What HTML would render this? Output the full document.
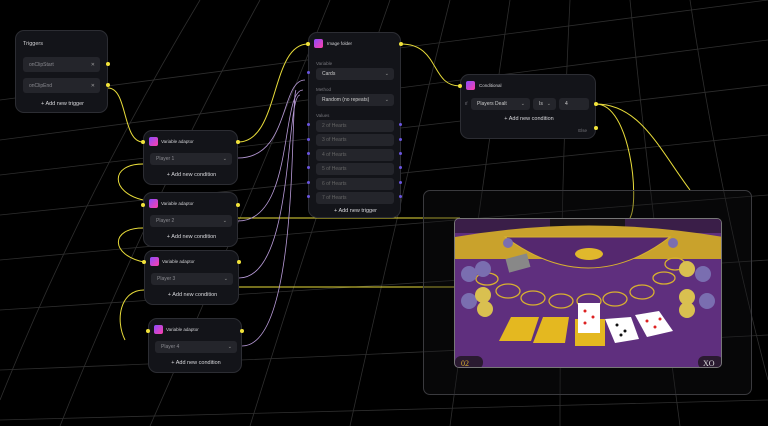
<!DOCTYPE html>
<html><head><meta charset="utf-8"><style>
*{margin:0;padding:0;box-sizing:border-box}
body{width:768px;height:426px;background:#000;overflow:hidden;position:relative;font-family:"Liberation Sans",sans-serif;color:#d8d8dc}
.n{position:absolute;background:#131419;border:1px solid #2c2d33;border-radius:9px}
.t{position:absolute;font-size:5.5px;color:#d0d0d4}
.ic{position:absolute;width:9px;height:9px;border-radius:2px;background:linear-gradient(135deg,#8a4cff,#ff3fa8)}
.f{position:absolute;background:#24252b;border-radius:3px;font-size:5px;color:#8a8a90;padding-left:6px;display:flex;align-items:center}
.add{position:absolute;font-size:5.5px;color:#d8d8dc;text-align:center}
.d{position:absolute;width:4px;height:4px;border-radius:50%;background:#f2e33a}
.p{position:absolute;width:3px;height:3px;border-radius:50%;background:#6a55e0}
.l{position:absolute;font-size:4.5px;color:#77777d}
.chev{position:absolute;right:5px;font-size:5px;color:#999}
</style></head><body>
<svg width="768" height="426" style="position:absolute;left:0;top:0">
<g stroke="#3a3a3a" stroke-width="0.8" fill="none" opacity="0.8">
<path d="M0 140 Q380 90 768 40"/><path d="M0 175 Q380 130 768 85"/><path d="M0 215 Q380 175 768 135"/>
<path d="M0 260 Q380 225 768 195"/><path d="M0 310 Q380 285 768 260"/><path d="M0 370 Q380 355 768 335"/>
<path d="M0 420 Q380 410 768 400"/><path d="M0 100 Q380 50 768 0"/>
<path d="M60 426 Q150 200 260 0"/><path d="M150 426 Q250 200 330 0"/><path d="M250 426 Q320 200 390 0"/>
<path d="M350 426 Q400 200 450 0"/><path d="M450 426 Q480 200 510 0"/><path d="M560 426 Q560 200 570 0"/>
<path d="M680 426 Q650 200 630 0"/><path d="M768 380 Q720 200 690 0"/><path d="M0 400 Q80 200 200 0"/>
</g>
<g stroke="#e8dc3a" stroke-width="1" fill="none">
<path d="M108 88 C128 88 122 142 143 142"/>
<path d="M238 142 C280 142 270 44 308 44"/>
<path d="M401 44 C440 44 430 86 460 86"/>
<path d="M596 104 C640 104 660 150 690 190"/>
<path d="M596 104 C630 104 640 200 630 218"/>
<path d="M238 218 L460 218"/>
<path d="M238 287 L454 287"/>
<path d="M143 164 C110 164 110 192 143 200"/>
<path d="M143 228 C110 228 110 255 144 262"/>
<path d="M144 290 C120 290 115 320 125 340"/>
</g>
<g stroke="#b89ad8" stroke-width="0.8" fill="none">
<path d="M238 158 C290 158 280 80 305 80"/>
<path d="M238 221 C295 221 280 90 303 90"/>
<path d="M239 278 C295 278 285 95 300 95"/>
<path d="M242 346 C300 346 290 100 296 90"/>
</g>
</svg>

<div class="n" style="left:15px;top:30px;width:93px;height:83px">
<div class="t" style="left:7px;top:10px">Triggers</div>
<div class="f" style="left:7px;top:26px;width:77px;height:15px">onClipStart<span class="chev">✕</span></div>
<div class="f" style="left:7px;top:47px;width:77px;height:15px">onClipEnd<span class="chev">✕</span></div>
<div class="add" style="left:0;width:93px;top:70px">+ Add new trigger</div>
</div>
<div class="d" style="left:106px;top:62px"></div><div class="d" style="left:106px;top:83px"></div>

<div class="n" style="left:143px;top:130px;width:95px;height:55px"><div class="ic" style="left:5px;top:6px"></div><div class="t" style="left:17px;top:8px;font-size:4.5px">Variable adaptor</div><div class="f" style="left:6px;top:22px;width:82px;height:12px">Player 1<span class="chev">⌄</span></div><div class="add" style="left:0;width:95px;top:41px">+ Add new condition</div></div>
<div class="n" style="left:143px;top:192px;width:95px;height:55px"><div class="ic" style="left:5px;top:6px"></div><div class="t" style="left:17px;top:8px;font-size:4.5px">Variable adaptor</div><div class="f" style="left:6px;top:22px;width:82px;height:12px">Player 2<span class="chev">⌄</span></div><div class="add" style="left:0;width:95px;top:41px">+ Add new condition</div></div>
<div class="n" style="left:144px;top:250px;width:95px;height:55px"><div class="ic" style="left:5px;top:6px"></div><div class="t" style="left:17px;top:8px;font-size:4.5px">Variable adaptor</div><div class="f" style="left:6px;top:22px;width:82px;height:12px">Player 3<span class="chev">⌄</span></div><div class="add" style="left:0;width:95px;top:41px">+ Add new condition</div></div>
<div class="n" style="left:148px;top:318px;width:94px;height:55px"><div class="ic" style="left:5px;top:6px"></div><div class="t" style="left:17px;top:8px;font-size:4.5px">Variable adaptor</div><div class="f" style="left:6px;top:22px;width:82px;height:12px">Player 4<span class="chev">⌄</span></div><div class="add" style="left:0;width:94px;top:41px">+ Add new condition</div></div>
<div class="d" style="left:141px;top:140px"></div><div class="d" style="left:236px;top:140px"></div>
<div class="d" style="left:141px;top:203px"></div><div class="d" style="left:236px;top:203px"></div>
<div class="d" style="left:142px;top:260px"></div><div class="d" style="left:237px;top:260px"></div>
<div class="d" style="left:146px;top:329px"></div><div class="d" style="left:240px;top:329px"></div>

<div class="n" style="left:308px;top:32px;width:93px;height:186px">
<div class="ic" style="left:5px;top:6px"></div><div class="t" style="left:18px;top:8px;font-size:4.5px">Image folder</div>
<div class="l" style="left:7px;top:28px">Variable</div>
<div class="f" style="left:7px;top:35px;width:78px;height:12px;color:#ccc">Cards<span class="chev">⌄</span></div>
<div class="l" style="left:7px;top:54px">Method</div>
<div class="f" style="left:7px;top:61px;width:78px;height:12px;color:#ccc">Random (no repeats)<span class="chev">⌄</span></div>
<div class="l" style="left:7px;top:80px">Values</div>
<div class="f" style="left:7px;top:87px;width:78px;height:12px;color:#666">2 of Hearts</div>
<div class="f" style="left:7px;top:101px;width:78px;height:12px;color:#666">3 of Hearts</div>
<div class="f" style="left:7px;top:116px;width:78px;height:12px;color:#666">4 of Hearts</div>
<div class="f" style="left:7px;top:130px;width:78px;height:12px;color:#666">5 of Hearts</div>
<div class="f" style="left:7px;top:145px;width:78px;height:12px;color:#666">6 of Hearts</div>
<div class="f" style="left:7px;top:159px;width:78px;height:12px;color:#666">7 of Hearts</div>
<div class="add" style="left:0;width:93px;top:175px">+ Add new trigger</div>
</div>
<div class="d" style="left:306px;top:42px"></div><div class="d" style="left:399px;top:42px"></div>
<div class="p" style="left:307px;top:71px"></div>
<div class="p" style="left:307px;top:123px"></div><div class="p" style="left:307px;top:138px"></div><div class="p" style="left:307px;top:152px"></div><div class="p" style="left:307px;top:166px"></div><div class="p" style="left:307px;top:181px"></div><div class="p" style="left:307px;top:195px"></div>
<div class="p" style="left:399px;top:123px"></div><div class="p" style="left:399px;top:138px"></div><div class="p" style="left:399px;top:152px"></div><div class="p" style="left:399px;top:166px"></div><div class="p" style="left:399px;top:181px"></div><div class="p" style="left:399px;top:195px"></div>

<div class="n" style="left:460px;top:74px;width:136px;height:65px">
<div class="ic" style="left:5px;top:6px"></div><div class="t" style="left:18px;top:8px;font-size:4.5px">Conditional</div>
<div class="l" style="left:4px;top:26px">If</div>
<div class="f" style="left:10px;top:23px;width:59px;height:12px;color:#ccc">Players Dealt<span class="chev">⌄</span></div>
<div class="f" style="left:72px;top:23px;width:23px;height:12px;color:#ccc">Is<span class="chev">⌄</span></div>
<div class="f" style="left:98px;top:23px;width:30px;height:12px;color:#ccc">4</div>
<div class="add" style="left:0;width:136px;top:41px">+ Add new condition</div>
<div class="l" style="right:8px;top:53px">Else</div>
</div>
<div class="d" style="left:458px;top:84px"></div><div class="d" style="left:594px;top:102px"></div><div class="d" style="left:594px;top:126px"></div>

<div style="position:absolute;left:423px;top:190px;width:329px;height:205px;border:1px solid #3a3a3e;border-radius:7px;background:rgba(20,20,24,0.35)"></div>
<div style="position:absolute;left:454px;top:218px;width:268px;height:150px;border-radius:5px;overflow:hidden;background:#5e2f7c;border:1px solid #777">
<svg width="268" height="150">
<rect width="268" height="150" fill="#5f2f7e"/>
<rect x="0" y="0" width="268" height="14" fill="#3a1e48"/>
<rect x="95" y="0" width="75" height="10" fill="#1a1418"/>
<path d="M0 18 Q134 -5 268 18 L268 40 L0 40Z" fill="#c9a22c"/>
<path d="M50 18 Q134 80 215 18 Z" fill="#55286f" stroke="#d8b030" stroke-width="1"/>
<ellipse cx="134" cy="35" rx="14" ry="6" fill="#e0b82c"/>
<g fill="none" stroke="#d8b030" stroke-width="1.3">
<ellipse cx="32" cy="60" rx="11" ry="6"/><ellipse cx="53" cy="72" rx="12" ry="7"/><ellipse cx="78" cy="79" rx="12" ry="7"/><ellipse cx="106" cy="82" rx="12" ry="7"/><ellipse cx="134" cy="82" rx="12" ry="7"/><ellipse cx="160" cy="80" rx="12" ry="7"/><ellipse cx="187" cy="73" rx="12" ry="7"/><ellipse cx="209" cy="59" rx="11" ry="6"/><ellipse cx="220" cy="45" rx="10" ry="6"/>
</g>
<rect x="52" y="37" width="22" height="14" fill="#888" transform="rotate(-15 63 44)"/>
<g fill="#7a6eb0"><circle cx="14" cy="55" r="8"/><circle cx="28" cy="50" r="8"/><circle cx="14" cy="82" r="8"/><circle cx="248" cy="55" r="8"/><circle cx="252" cy="82" r="8"/><circle cx="53" cy="24" r="5"/><circle cx="218" cy="24" r="5"/></g>
<g fill="#d9c050"><circle cx="28" cy="76" r="8"/><circle cx="30" cy="90" r="8"/><circle cx="232" cy="50" r="8"/><circle cx="232" cy="78" r="8"/><circle cx="232" cy="91" r="8"/></g>
<polygon points="56,98 84,98 76,122 44,122" fill="#e4b820"/>
<polygon points="88,98 114,98 110,124 78,124" fill="#e4b820"/>
<rect x="120" y="100" width="30" height="27" fill="#e4b820"/>
<rect x="123" y="84" width="22" height="30" fill="#fff"/>
<polygon points="150,100 176,98 184,120 160,124" fill="#fff"/>
<polygon points="180,96 204,92 218,112 192,118" fill="#fff"/>
<g fill="#d22"><circle cx="130" cy="92" r="1.5"/><circle cx="138" cy="98" r="1.5"/><circle cx="130" cy="104" r="1.5"/><circle cx="192" cy="102" r="1.5"/><circle cx="200" cy="108" r="1.5"/><circle cx="205" cy="100" r="1.5"/></g>
<g fill="#111"><circle cx="162" cy="106" r="1.5"/><circle cx="170" cy="112" r="1.5"/><circle cx="166" cy="116" r="1.5"/></g>
<rect x="0" y="137" width="28" height="13" rx="6" fill="#2a1a30"/>
<text x="6" y="147" font-size="8" fill="#d8b030" font-family="Liberation Serif">02</text>
<rect x="243" y="137" width="25" height="13" rx="6" fill="#2a1a30"/>
<text x="248" y="147" font-size="8" fill="#ddd" font-family="Liberation Serif">XO</text>
</svg>
</div>
</body></html>
